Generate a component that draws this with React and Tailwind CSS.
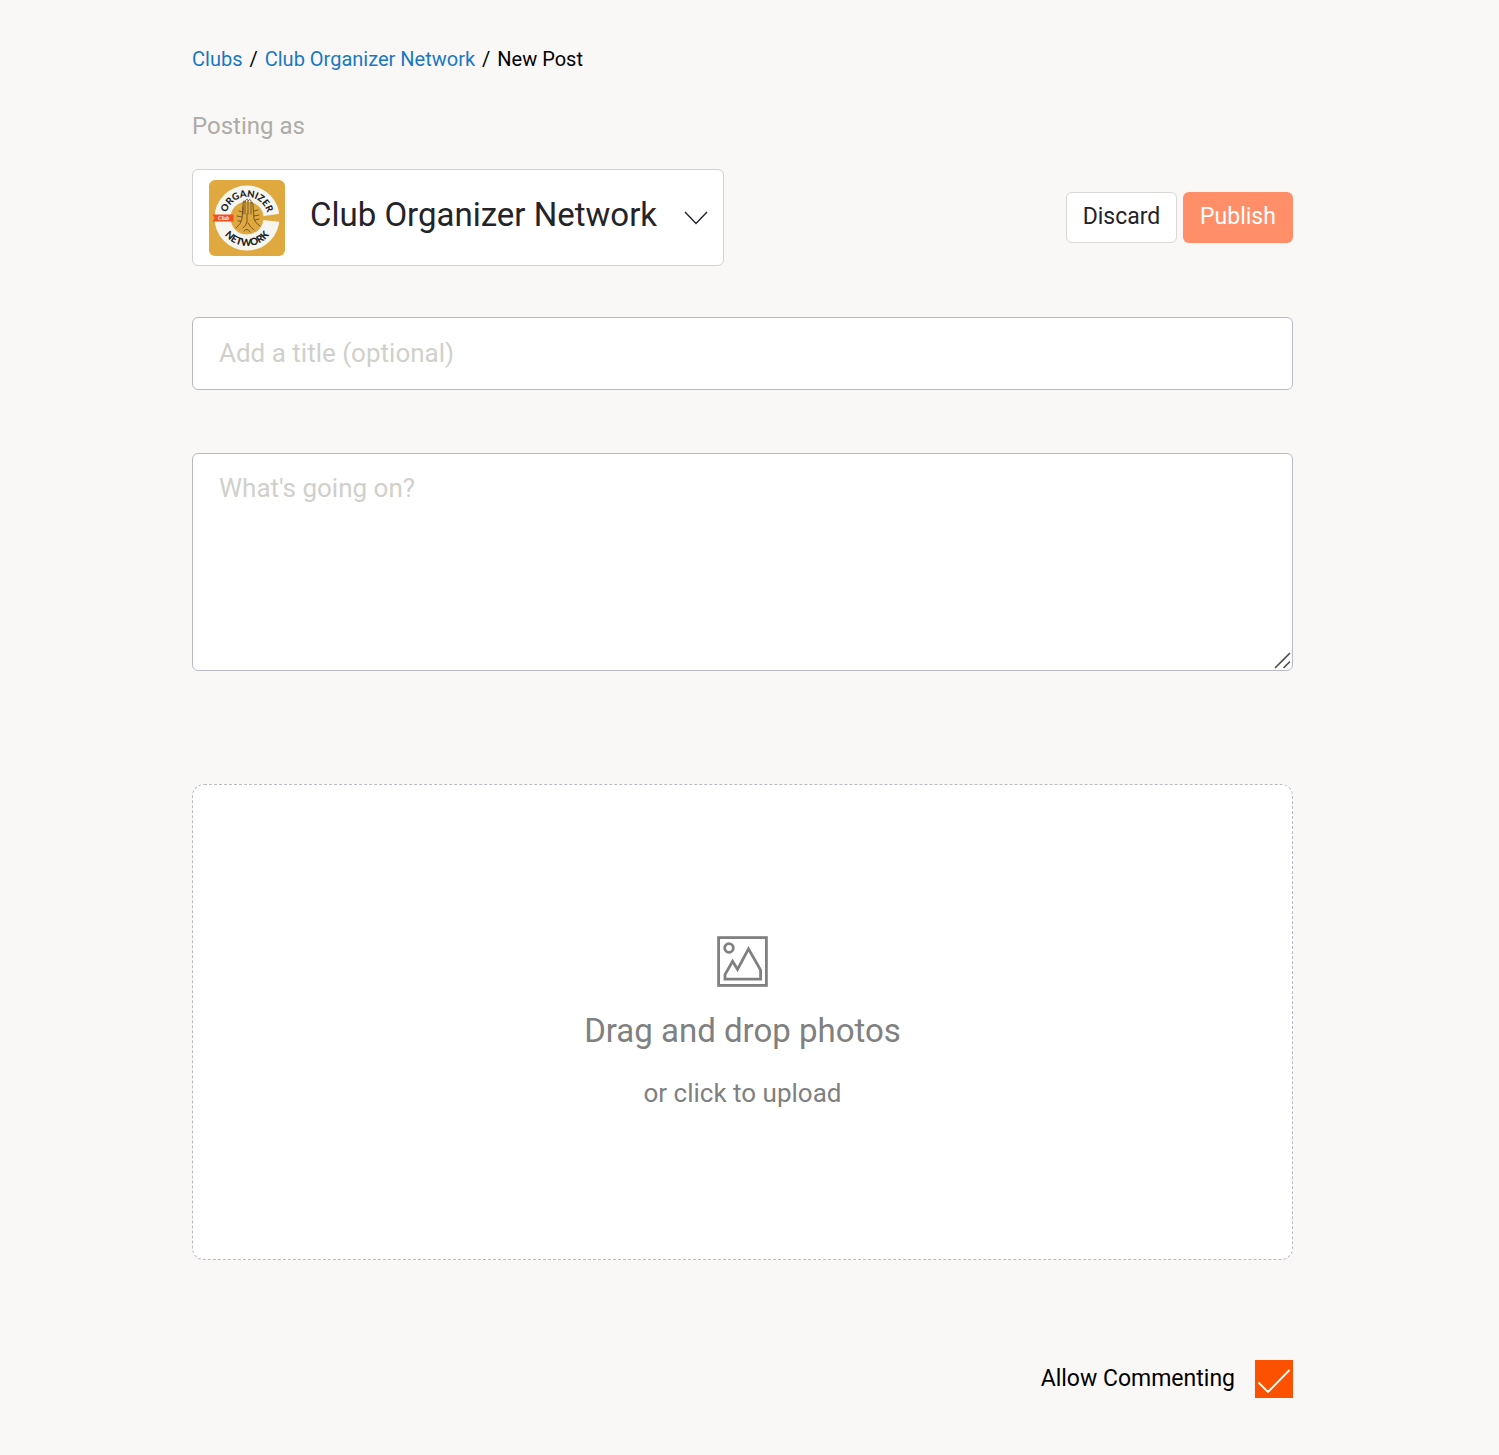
import { useState } from 'react'

function ClubLogo() {
  return (
    <svg viewBox="0 0 76 76" className="size-[76px] shrink-0 rounded-md" role="img" aria-label="Club Organizer Network">
      <defs>
        <path id="logo-top" d="M 17 38 A 21 21 0 0 1 59 38" />
        <path id="logo-bottom" d="M 10 38 A 28 28 0 0 0 66 38" />
      </defs>
      <rect width="76" height="76" fill="#dfa93f" />
      <circle cx="38" cy="38" r="24.5" fill="none" stroke="#f7f5f0" strokeWidth="16" />
      <path d="M52 36.5 L72 33.6 V42 L52 39.8 Z" fill="#dfa93f" />
      <g fill="none" stroke="#5b4525" strokeWidth="0.8" strokeLinecap="round" strokeLinejoin="round">
        <path d="M34 34 V24 Q34 20 36 21 V34 M36 22 Q37 18 39 20 V34 M39 21 Q41 18 42 21 V34 M42 23 Q44 21 44 25 L45 39 Q46 43 51 46" />
        <path d="M34 27 L33 39 Q32 44 27 48 M38 34 V42 Q37 46 34 48 M39 43 Q41 47 45 50 M35 51 Q38 47 41 52" />
        <path d="M30 31 L33 32 M28 36 L33 37 M29 41 L32 41 M45 31 L49 30 M45 36 L50 35 M46 40 L50 39" />
      </g>
      <path d="M3.5 34.5 H24.5 V41.5 H3.5 L5.5 38 Z" fill="#f4501e" />
      <text x="9" y="40" fontSize="5.5" className="font-['Liberation_Serif',serif] font-bold italic" fill="#fff">
        Club
      </text>
      <g className="font-['Lato',sans-serif] font-black" fill="#1c1c1c" textAnchor="middle">
        <text fontSize="9.5">
          <textPath href="#logo-top" startOffset="50%">
            ORGANIZER
          </textPath>
        </text>
        <text fontSize="10">
          <textPath href="#logo-bottom" startOffset="50%">
            NETWORK
          </textPath>
        </text>
      </g>
    </svg>
  )
}

function PhotoIcon() {
  return (
    <svg viewBox="0 0 51 51" className="size-[51px]" fill="none" stroke="#808080" strokeWidth="2.8" aria-hidden="true">
      <rect x="1.6" y="1.6" width="47.8" height="47.8" />
      <circle cx="12" cy="12" r="4.3" />
      <path d="M8 43.2 V38.5 L15.6 25.2 L20.5 33.5 L31.5 12.8 L43.6 34 V43.2 Z" />
    </svg>
  )
}

function App() {
  const [title, setTitle] = useState('')
  const [body, setBody] = useState('')
  const [allowComments, setAllowComments] = useState(true)

  return (
    <div className="min-h-screen bg-[#f9f8f6] pr-3.5 font-['Roboto',sans-serif]">
      <form className="mx-auto max-w-[1101px] pt-[45px] pb-14" onSubmit={(e) => e.preventDefault()}>
        <nav aria-label="Breadcrumb" className="flex gap-[7px] text-[20px] leading-7 text-black">
          <a href="#clubs" className="text-[#1977c4]">
            Clubs
          </a>
          <span>/</span>
          <a href="#club" className="text-[#1977c4]">
            Club Organizer Network
          </a>
          <span>/</span>
          <span>New Post</span>
        </nav>

        <label htmlFor="posting-as" className="mt-[35px] block text-2xl leading-9 text-[#adaca8]">
          Posting as
        </label>

        <div className="mt-[25px] flex items-center justify-between">
          <div className="relative flex h-[97px] w-[532px] items-center rounded-md border border-[#d3d2d0] bg-white pl-4">
            <ClubLogo />
            <select
              id="posting-as"
              className="h-full flex-1 appearance-none bg-transparent pr-12 pb-1.5 pl-[25px] text-[33px] text-[#242428] outline-none"
            >
              <option>Club Organizer Network</option>
            </select>
            <svg
              viewBox="0 0 24 14"
              className="pointer-events-none absolute right-[15px] h-3.5 w-6"
              fill="none"
              stroke="#242428"
              strokeWidth="1.4"
              aria-hidden="true"
            >
              <path d="M1 1 L12 12.5 L23 1" />
            </svg>
          </div>

          <div className="flex gap-1.5">
            <button
              type="button"
              className="h-[51px] w-[111px] rounded-md border border-[#d8d8d5] bg-white text-[23px] text-[#242428]"
            >
              Discard
            </button>
            <button type="submit" className="h-[51px] w-[110px] rounded-md bg-[#ff8e69] text-[23px] text-white">
              Publish
            </button>
          </div>
        </div>

        <input
          type="text"
          aria-label="Title"
          placeholder="Add a title (optional)"
          value={title}
          onChange={(e) => setTitle(e.target.value)}
          className="mt-[51px] block h-[73px] w-full rounded-md border border-[#babac6] bg-white px-[26px] pb-0.5 text-[26px] text-[#242428] outline-none placeholder:text-[#d0d0cb]"
        />

        <div className="relative mt-[63px]">
          <textarea
            aria-label="Post body"
            placeholder="What's going on?"
            value={body}
            onChange={(e) => setBody(e.target.value)}
            className="block h-[218px] w-full resize-none rounded-md border border-[#babac6] bg-white px-[26px] py-4 text-[26px] leading-9 text-[#242428] outline-none placeholder:text-[#d0d0cb]"
          />
          <svg
            viewBox="0 0 18 18"
            className="pointer-events-none absolute right-px bottom-px size-[18px]"
            stroke="#4a4a4a"
            strokeWidth="1.6"
            aria-hidden="true"
          >
            <path d="M1 16 L16 1 M9.5 16 L16 9.5" />
          </svg>
        </div>

        <label className="mt-[113px] flex h-[476px] cursor-pointer flex-col items-center justify-center rounded-xl border border-dashed border-[#babac6] bg-white pt-0.5 text-[#808080]">
          <input type="file" accept="image/*" multiple className="sr-only" />
          <PhotoIcon />
          <span className="mt-6 text-[33px] leading-10">Drag and drop photos</span>
          <span className="mt-6 text-[26px] leading-9">or click to upload</span>
        </label>

        <div className="mt-[100px] flex items-center justify-end gap-5">
          <label htmlFor="allow-commenting" className="text-[23px] leading-8 text-black">
            Allow Commenting
          </label>
          <div className="grid size-[38px]">
            <input
              id="allow-commenting"
              type="checkbox"
              checked={allowComments}
              onChange={(e) => setAllowComments(e.target.checked)}
              className="peer col-start-1 row-start-1 size-full appearance-none border border-[#fc5200] bg-white checked:bg-[#fc5200]"
            />
            <svg
              viewBox="0 0 38 38"
              className="pointer-events-none invisible col-start-1 row-start-1 size-full peer-checked:visible"
              fill="none"
              stroke="#fff"
              strokeWidth="1.8"
              aria-hidden="true"
            >
              <path d="M3.5 22.5 L13 32 L34.5 10" />
            </svg>
          </div>
        </div>
      </form>
    </div>
  )
}

export default App
